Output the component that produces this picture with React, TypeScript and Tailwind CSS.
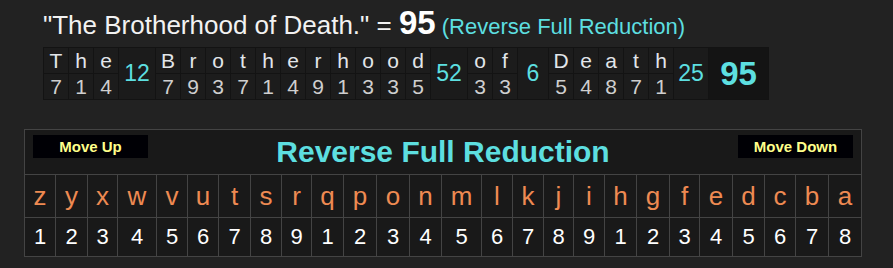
import React from 'react';

type Cell = { ch: string; n: number };

const words: { letters: Cell[]; sum: number; w: string }[] = [
  { letters: [{ ch: 'T', n: 7 }, { ch: 'h', n: 1 }, { ch: 'e', n: 4 }], sum: 12, w: 'w-[36px]' },
  {
    letters: [
      { ch: 'B', n: 7 }, { ch: 'r', n: 9 }, { ch: 'o', n: 3 }, { ch: 't', n: 7 }, { ch: 'h', n: 1 },
      { ch: 'e', n: 4 }, { ch: 'r', n: 9 }, { ch: 'h', n: 1 }, { ch: 'o', n: 3 }, { ch: 'o', n: 3 },
      { ch: 'd', n: 5 },
    ],
    sum: 52,
    w: 'w-[36px]',
  },
  { letters: [{ ch: 'o', n: 3 }, { ch: 'f', n: 3 }], sum: 6, w: 'w-[30px]' },
  {
    letters: [{ ch: 'D', n: 5 }, { ch: 'e', n: 4 }, { ch: 'a', n: 8 }, { ch: 't', n: 7 }, { ch: 'h', n: 1 }],
    sum: 25,
    w: 'w-[34px]',
  },
];

const alphabet = 'zyxwvutsrqponmlkjihgfedcba'.split('');
const values = [1, 2, 3, 4, 5, 6, 7, 8, 9, 1, 2, 3, 4, 5, 6, 7, 8, 9, 1, 2, 3, 4, 5, 6, 7, 8];

function Breakdown() {
  return (
    <div className="flex w-fit gap-px bg-[#131313] p-px">
      {words.map((word, i) => (
        <React.Fragment key={i}>
          {word.letters.map((c, j) => (
            <div key={j} className="flex w-[24px] flex-col gap-px">
              <div className="flex h-[25px] items-center justify-center bg-[#1c1c1c] text-[21px] leading-none text-[#e2e6ea]">
                {c.ch}
              </div>
              <div className="flex h-[25px] items-center justify-center bg-[#1c1c1c] text-[21px] leading-none text-[#cfcfcf]">
                {c.n}
              </div>
            </div>
          ))}
          <div className={`flex items-center justify-center bg-[#1b1b1b] text-[23px] leading-none text-[#5ddfe0] ${word.w}`}>
            {word.sum}
          </div>
        </React.Fragment>
      ))}
      <div className="flex w-[59px] items-center justify-center bg-[#141414] text-[33px] font-bold leading-none text-[#5ddfe0]">
        95
      </div>
    </div>
  );
}

function MoveButton({ label }: { label: string }) {
  return (
    <div className="flex h-[23px] w-[115px] items-center justify-center bg-[#000005] text-[15px] font-bold leading-none text-[#ffff8a]">
      {label}
    </div>
  );
}

function CipherTable() {
  return (
    <div className="w-[838px] border-l border-t border-[#444444] bg-[#191919]">
      <div className="flex h-[45px] items-start justify-between border-b border-r border-[#444444] px-[8px] pt-[5px]">
        <MoveButton label="Move Up" />
        <div className="mt-[2px] flex-1 text-center text-[30px] font-bold leading-none text-[#5ddfe0]">
          Reverse Full Reduction
        </div>
        <MoveButton label="Move Down" />
      </div>
      <div className="grid grid-cols-[31px_32px_30px_39px_31px_31px_32px_31px_30px_32px_33px_33px_32px_40px_31px_31px_30px_31px_32px_33px_30px_33px_32px_31px_33px_33px]">
        {alphabet.map((ch) => (
          <div
            key={ch}
            className="flex h-[43px] items-center justify-center border-b border-r border-[#444444] text-[26px] leading-none text-[#ee8a52]"
          >
            {ch}
          </div>
        ))}
        {values.map((v, i) => (
          <div
            key={i}
            className="flex h-[39px] items-center justify-center border-b border-r border-[#444444] text-[22px] leading-none text-white"
          >
            {v}
          </div>
        ))}
      </div>
    </div>
  );
}

export default function App() {
  return (
    <div className="h-[268px] w-[893px] bg-[#222222] font-['Liberation_Sans',Arial,sans-serif]">
      <div className="pl-[43px] pt-[6px]">
        <div className="h-[34px] whitespace-nowrap leading-[34px]">
          <span className="text-[26px] text-[#f2f2f2]">"The Brotherhood of Death." = </span>
          <span className="text-[33px] font-bold text-white">95</span>
          <span className="text-[22px] text-[#5ddfe0]"> (Reverse Full Reduction)</span>
        </div>
        <div className="mt-[7px]">
          <Breakdown />
        </div>
      </div>
      <div className="pl-[24px] pt-[29px]">
        <CipherTable />
      </div>
    </div>
  );
}
